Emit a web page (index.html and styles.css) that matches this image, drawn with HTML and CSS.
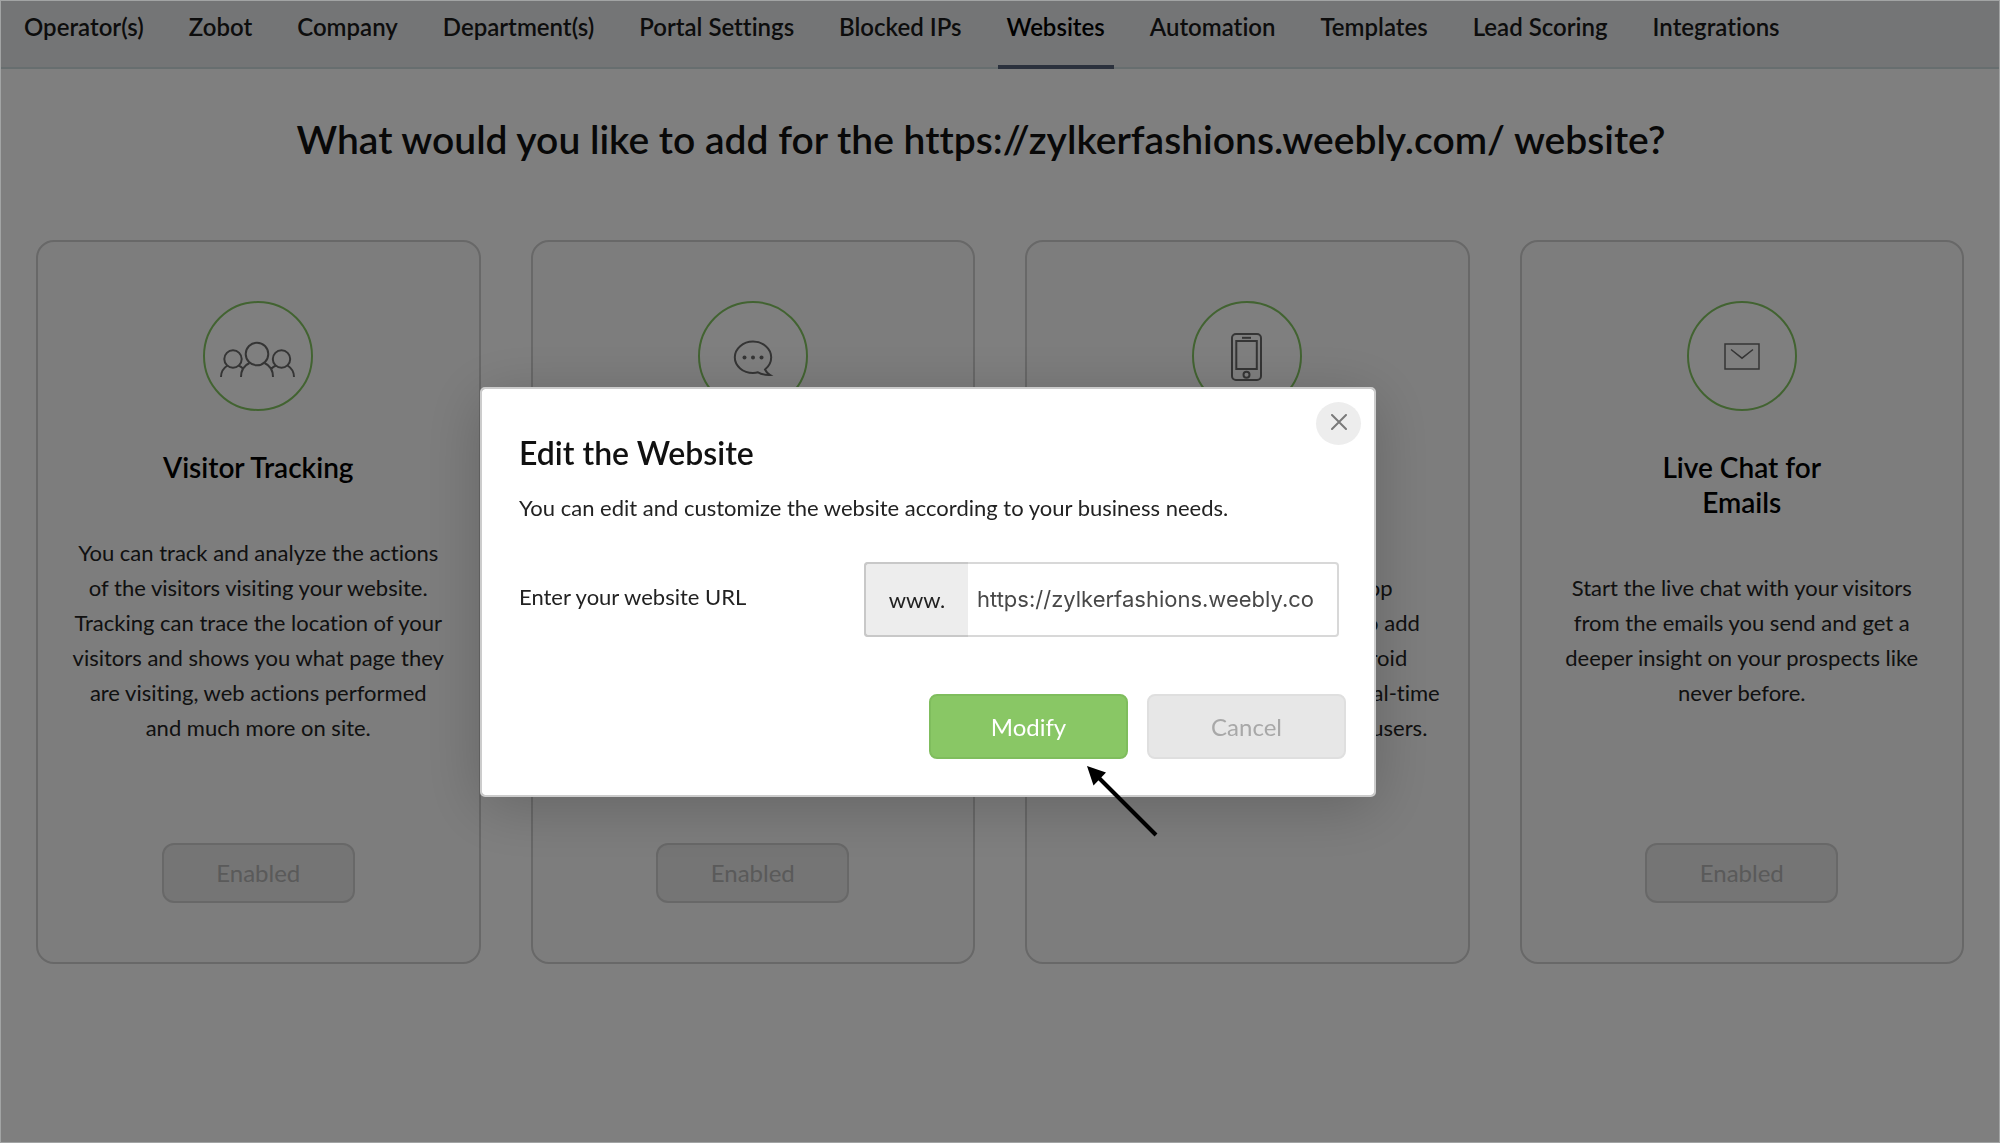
FILE: index.html
```html
<!DOCTYPE html>
<html lang="en">
<head>
<meta charset="utf-8">
<meta name="viewport" content="width=device-width, initial-scale=1">
<title>Websites - Settings</title>
<link rel="stylesheet" href="styles.css">
</head>
<body>
<nav class="tabs" aria-label="Settings">
  <a class="tab" href="#">Operator(s)</a>
  <a class="tab" href="#">Zobot</a>
  <a class="tab" href="#">Company</a>
  <a class="tab" href="#">Department(s)</a>
  <a class="tab" href="#">Portal Settings</a>
  <a class="tab" href="#">Blocked IPs</a>
  <a class="tab tab-active" href="#" aria-current="page">Websites</a>
  <a class="tab" href="#">Automation</a>
  <a class="tab" href="#">Templates</a>
  <a class="tab" href="#">Lead Scoring</a>
  <a class="tab" href="#">Integrations</a>
</nav>

<main class="page">
  <h1 class="page-title">What would you like to add for the https://zylkerfashions.weebly.com/ website?</h1>
  <div class="cards">
    <section class="card">
      <div class="ring">
        <svg class="icon" viewBox="2 1 106 106" aria-hidden="true">
          <circle cx="54" cy="52" r="11.3"/>
          <circle cx="30" cy="57" r="8.7"/>
          <circle cx="78.500" cy="57" r="8.700"/>
          <path d="M38 75c0-6 3-11.500 8.500-14M70 75c0-6-3-11.500-8.500-14M18 75c0-5 2.500-9 6.500-11.500M91 75c0-5-2.500-9-6.500-11.500M35.500 63.500c2 .8 3.500 2 5 3.500M73 63.500c-2 .8-3.500 2-5 3.500"/>
        </svg>
      </div>
      <h2 class="card-title">Visitor Tracking</h2>
      <p class="card-text">You can track and analyze the actions<br>of the visitors visiting your website.<br>Tracking can trace the location of your<br>visitors and shows you what page they<br>are visiting, web actions performed<br>and much more on site.</p>
      <button class="btn btn-enabled" type="button" disabled>Enabled</button>
    </section>
    <section class="card">
      <div class="ring">
        <svg class="icon" viewBox="2 1 106 106" aria-hidden="true">
          <path d="M67 67.500c3.800-3 6.200-7.300 6.200-12.200 0-8.700-8.200-15.800-18.200-15.800s-18.200 7.100-18.200 15.800S45 71 55 71c1.800 0 3.500-.2 5-.7 3.500 2 7.500 3 12.200 2.700-2.500-1.500-4.300-3.300-5.200-5.500z"/>
          <g class="dots"><circle cx="46.500" cy="55.500" r="2"/><circle cx="55" cy="55.500" r="2"/><circle cx="63.500" cy="55.500" r="2"/></g>
        </svg>
      </div>
      <button class="btn btn-enabled" type="button" disabled>Enabled</button>
    </section>
    <section class="card">
      <div class="ring">
        <svg class="icon" viewBox="2 1 106 106" aria-hidden="true">
          <rect x="40" y="32" width="29" height="46" rx="4"/>
          <rect x="44.300" y="39" width="20.500" height="28"/>
          <path d="M50 35.800h9"/>
          <circle cx="54.500" cy="72.700" r="3"/>
        </svg>
      </div>
      <h2 class="card-title">Live Chat for<br>Mobile Apps</h2>
      <p class="card-text">Add live chat to a mobile shop<br>of your brands and you can also add<br>live chat to both iOS and Android<br>apps and start engaging with a real-time<br>live conversations with the app users.</p>
    </section>
    <section class="card">
      <div class="ring">
        <svg class="icon icon-thin" viewBox="2 2 106 106" aria-hidden="true">
          <rect x="38" y="43" width="34" height="25"/>
          <path d="M44 48.500l11 8.700 11-8.700"/>
        </svg>
      </div>
      <h2 class="card-title">Live Chat for<br>Emails</h2>
      <p class="card-text">Start the live chat with your visitors<br>from the emails you send and get a<br>deeper insight on your prospects like<br>never before.</p>
      <button class="btn btn-enabled" type="button" disabled>Enabled</button>
    </section>
  </div>
</main>

<div class="overlay">
  <form class="dialog" role="dialog" aria-labelledby="dialog-title">
    <button class="close" type="button" aria-label="Close">
      <svg class="close-icon" viewBox="0 0 16 16" aria-hidden="true"><path d="M1 1l14 14M15 1L1 15"/></svg>
    </button>
    <h2 class="dialog-title" id="dialog-title">Edit the Website</h2>
    <p class="dialog-text">You can edit and customize the website according to your business needs.</p>
    <div class="field">
      <label class="field-label" for="url">Enter your website URL</label>
      <div class="url-group">
        <span class="url-prefix">www.</span>
        <input class="url-input" id="url" type="text" value="https://zylkerfashions.weebly.co">
      </div>
    </div>
    <div class="actions">
      <button class="btn btn-primary" type="button">Modify</button>
      <button class="btn btn-cancel" type="button">Cancel</button>
    </div>
    <svg class="pointer" viewBox="0 0 72 72" aria-hidden="true">
      <path class="pointer-line" d="M12 12l57 57"/>
      <path class="pointer-head" d="M0 0l19 6.500L6.500 19.500z"/>
    </svg>
  </form>
</div>
</body>
</html>
```
FILE: styles.css
```css
*,
*::before,
*::after {
  box-sizing: border-box;
}

body {
  margin: 0;
  min-height: 100vh;
  background: #fff;
  color: #111;
  font-family: Lato, "Liberation Sans", sans-serif;
  font-size: 22px;
  font-variant-ligatures: none;
  line-height: 35px;
}

h1,
h2,
p {
  margin: 0;
}

button,
input {
  font: inherit;
}

/* Top tabs */
.tabs {
  display: flex;
  gap: 27px;
  padding: 0 15px;
  background: #e9ebed;
  box-shadow: inset 0 -2px #cfdcdf;
}

.tab {
  padding: 0 9px 11px;
  border-bottom: 4px solid transparent;
  color: #1a1a1a;
  font-size: 24px;
  font-weight: 600;
  line-height: 54px;
  text-decoration: none;
  white-space: nowrap;
}

.tab-active {
  border-color: #57627a;
  color: #000;
}

/* Page */
.page {
  padding: 47px 36px 0;
}

.page-title {
  padding-right: 38px;
  margin-bottom: 78px;
  color: #111;
  font-size: 39px;
  font-weight: 600;
  line-height: 46px;
  text-align: center;
}

.cards {
  display: grid;
  grid-template-columns: repeat(4, 1fr);
  gap: 50px;
}

.card {
  display: flex;
  flex-direction: column;
  align-items: center;
  min-height: 724px;
  padding: 59px 20px;
  border: 2px solid #d0d0d0;
  border-radius: 18px;
  background: #fafafa;
  text-align: center;
}

.ring {
  width: 110px;
  height: 110px;
  margin-bottom: 39px;
  border: 2px solid #85c763;
  border-radius: 50%;
  background: #fff;
}

.icon {
  display: block;
  width: 100%;
  height: 100%;
  fill: none;
  stroke: #6a6a6a;
  stroke-width: 2;
}

.icon-thin {
  stroke-width: 1.5;
}

.dots {
  fill: #6a6a6a;
  stroke: none;
}

.card-title {
  margin-bottom: 50px;
  color: #000;
  font-size: 28px;
  font-weight: 600;
}

.card-text {
  color: #222;
  white-space: nowrap;
}

.btn {
  padding: 0;
  border: 2px solid;
  border-radius: 8px;
  font-size: 24px;
}

.btn-enabled {
  width: 193px;
  height: 60px;
  padding-bottom: 2px;
  margin-top: auto;
  border-color: #d0d0d0;
  border-radius: 12px;
  background: #eaeaea;
  color: #b4b4b4;
}

/* Dialog */
.overlay {
  position: fixed;
  inset: 0;
  display: flex;
  justify-content: center;
  align-items: flex-start;
  padding: 386px 144px 0 0;
  border: 1px solid #a2a4a4;
  background: rgba(0, 0, 0, 0.5);
}

.dialog {
  position: relative;
  width: 896px;
  padding: 44px 28px 36px 37px;
  border: 2px solid #ccc;
  border-radius: 5px;
  background: #fff;
  background-clip: padding-box;
  box-shadow: 0 10px 60px rgba(0, 0, 0, 0.2);
}

.close {
  position: absolute;
  top: 13px;
  right: 13px;
  display: grid;
  place-items: center;
  width: 45px;
  height: 43px;
  padding: 0 0 3px;
  border: 0;
  border-radius: 50%;
  background: #ededed;
}

.close-icon {
  width: 16px;
  height: 16px;
  fill: none;
  stroke: #7a7a7a;
  stroke-width: 2;
  stroke-linecap: round;
}

.dialog-title {
  margin-bottom: 17px;
  font-size: 32px;
  font-weight: 600;
  line-height: 40px;
}

.dialog-text {
  margin-bottom: 37px;
  color: #222;
}

.field {
  display: flex;
  justify-content: space-between;
  align-items: center;
  margin: 0 7px 57px 0;
}

.field-label {
  padding-bottom: 6px;
  color: #222;
}

.url-group {
  display: flex;
  width: 475px;
  height: 75px;
  border: 2px solid #d8d8d8;
  border-radius: 4px;
}

.url-prefix {
  display: grid;
  place-items: center;
  width: 104px;
  margin: -2px 0 -2px -2px;
  border: 2px solid #c8c8c8;
  border-right: 0;
  border-radius: 4px 0 0 4px;
  background: #ededed;
  color: #222;
}

.url-input {
  flex: 1;
  min-width: 0;
  padding: 0 20px 0 9px;
  border: 0;
  background: transparent;
  color: #484848;
  font-family: Inter, "Liberation Sans", sans-serif;
  outline: 0;
}

.actions {
  display: flex;
  justify-content: flex-end;
  gap: 19px;
}

.btn-primary,
.btn-cancel {
  width: 199px;
  height: 65px;
}

.btn-primary {
  border-color: #7fbd5d;
  background: #89c765;
  color: #fff;
}

.btn-cancel {
  border-color: #dfdfdf;
  background: #e7e7e7;
  color: #a8a8a8;
}

/* Arrow laid over the dialog's lower edge */
.pointer {
  position: absolute;
  top: 377px;
  left: 605px;
  width: 72px;
  height: 72px;
}

.pointer-line {
  fill: none;
  stroke: #000;
  stroke-width: 4;
}

.pointer-head {
  fill: #000;
}
```
